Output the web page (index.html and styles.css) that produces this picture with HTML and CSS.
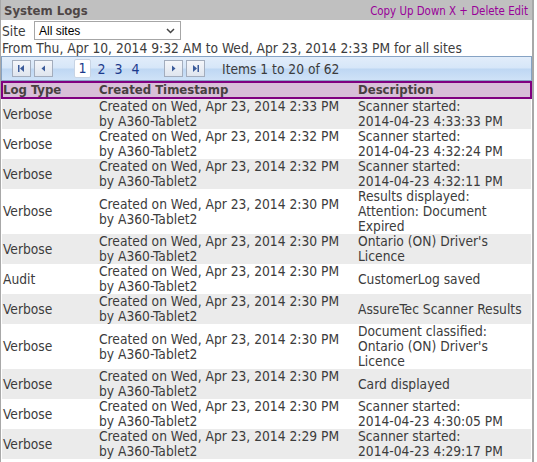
FILE: index.html
```html
<!DOCTYPE html>
<html>
<head>
<meta charset="utf-8">
<link rel="stylesheet" href="styles.css">
</head>
<body>
<div class="panel">
  <div class="titlebar">
    <span class="title">System Logs</span>
    <span class="actions"><a>Copy</a> <a>Up</a> <a>Down</a> <a>X</a> <a>+</a> <a>Delete</a> <a>Edit</a></span>
  </div>
  <div class="siterow">
    <span class="sitelabel">Site</span>
    <div class="select"><span>All sites</span>
      <svg width="9" height="6" viewBox="0 0 9 6"><path d="M1 1 L4.5 4.5 L8 1" fill="none" stroke="#444" stroke-width="1.5"/></svg>
    </div>
  </div>
  <div class="range">From Thu, Apr 10, 2014 9:32 AM to Wed, Apr 23, 2014 2:33 PM for all sites</div>
  <div class="pager">
    <div class="btns">
      <span class="pbtn"><svg width="9" height="9" viewBox="0 0 9 9"><rect x="1" y="1" width="1.5" height="7" fill="#3b5b9a"/><path d="M7 1 L3 4.5 L7 8 Z" fill="#3b5b9a"/></svg></span>
      <span class="pbtn"><svg width="9" height="9" viewBox="0 0 9 9"><path d="M6 1.5 L2.5 4.5 L6 7.5 Z" fill="#3b5b9a"/></svg></span>
    </div>
    <div class="pages"><span class="page cur">1</span><span class="page">2</span><span class="page">3</span><span class="page">4</span></div>
    <div class="btns">
      <span class="pbtn"><svg width="9" height="9" viewBox="0 0 9 9"><path d="M3 1.5 L6.5 4.5 L3 7.5 Z" fill="#3b5b9a"/></svg></span>
      <span class="pbtn"><svg width="9" height="9" viewBox="0 0 9 9"><path d="M2 1 L6 4.5 L2 8 Z" fill="#3b5b9a"/><rect x="6.5" y="1" width="1.5" height="7" fill="#3b5b9a"/></svg></span>
    </div>
    <div class="items">Items 1 to 20 of 62</div>
  </div>
  <table class="grid">
    <thead>
      <tr><th class="c1">Log Type</th><th class="c2">Created Timestamp</th><th class="c3">Description</th></tr>
    </thead>
    <tbody>
      <tr class="alt"><td>Verbose</td><td>Created on Wed, Apr 23, 2014 2:33 PM<br>by A360-Tablet2</td><td>Scanner started:<br>2014-04-23 4:33:33 PM</td></tr>
      <tr><td>Verbose</td><td>Created on Wed, Apr 23, 2014 2:32 PM<br>by A360-Tablet2</td><td>Scanner started:<br>2014-04-23 4:32:24 PM</td></tr>
      <tr class="alt"><td>Verbose</td><td>Created on Wed, Apr 23, 2014 2:32 PM<br>by A360-Tablet2</td><td>Scanner started:<br>2014-04-23 4:32:11 PM</td></tr>
      <tr><td>Verbose</td><td>Created on Wed, Apr 23, 2014 2:30 PM<br>by A360-Tablet2</td><td>Results displayed:<br>Attention: Document<br>Expired</td></tr>
      <tr class="alt"><td>Verbose</td><td>Created on Wed, Apr 23, 2014 2:30 PM<br>by A360-Tablet2</td><td>Ontario (ON) Driver's<br>Licence</td></tr>
      <tr><td>Audit</td><td>Created on Wed, Apr 23, 2014 2:30 PM<br>by A360-Tablet2</td><td>CustomerLog saved</td></tr>
      <tr class="alt"><td>Verbose</td><td>Created on Wed, Apr 23, 2014 2:30 PM<br>by A360-Tablet2</td><td>AssureTec Scanner Results</td></tr>
      <tr><td>Verbose</td><td>Created on Wed, Apr 23, 2014 2:30 PM<br>by A360-Tablet2</td><td>Document classified:<br>Ontario (ON) Driver's<br>Licence</td></tr>
      <tr class="alt"><td>Verbose</td><td>Created on Wed, Apr 23, 2014 2:30 PM<br>by A360-Tablet2</td><td>Card displayed</td></tr>
      <tr><td>Verbose</td><td>Created on Wed, Apr 23, 2014 2:30 PM<br>by A360-Tablet2</td><td>Scanner started:<br>2014-04-23 4:30:05 PM</td></tr>
      <tr class="alt"><td>Verbose</td><td>Created on Wed, Apr 23, 2014 2:29 PM<br>by A360-Tablet2</td><td>Scanner started:<br>2014-04-23 4:29:17 PM</td></tr>
    </tbody>
  </table>
</div>
</body>
</html>
```
FILE: styles.css
```css
html, body {
  margin: 0;
  padding: 0;
  background: #fff;
  overflow: hidden;
}
body {
  font-family: "DejaVu Sans Condensed", "DejaVu Sans", sans-serif;
  font-size: 13.7px;
  color: #3c3c3c;
}
.panel {
  width: 531px;
  border-left: 1px solid #a8a8a8;
  border-right: 2px solid #a8a8a8;
  min-height: 462px;
}
.titlebar {
  height: 20px;
  background: #c0c0c0;
  display: flex;
  align-items: flex-end;
  justify-content: space-between;
  padding: 0 4px 0 3px;
}
.title {
  font-weight: bold;
  font-size: 13px;
  color: #4e4646;
  line-height: 17px;
  padding-bottom: 1px;
}
.actions {
  font-size: 11.4px;
  color: #990099;
  line-height: 15px;
  padding-bottom: 1px;
}
.actions a { color: #990099; }
.siterow {
  height: 21px;
  display: flex;
  align-items: center;
  padding-left: 1px;
}
.sitelabel {
  width: 32px;
}
.select {
  box-sizing: border-box;
  width: 147px;
  height: 19px;
  border: 1px solid #a6a6a6;
  display: flex;
  align-items: center;
  justify-content: space-between;
  padding: 0 5px 0 4px;
  font-family: "Liberation Sans", sans-serif;
  font-size: 12px;
  color: #000;
}
.range {
  padding-left: 1px;
  line-height: 15px;
  height: 15px;
}
.pager {
  height: 23px;
  border: 1px solid #86a3c4;
  background: linear-gradient(#e2edfa 0%, #d6e6f8 48%, #bed7f3 52%, #cfe2f7 100%);
  display: flex;
  align-items: center;
  padding-left: 10px;
}
.btns {
  display: flex;
  gap: 3px;
}
.pbtn {
  width: 17px;
  height: 15px;
  border: 1px solid #a3adbd;
  background: linear-gradient(#f4f6fa, #dfe5ee);
  display: flex;
  align-items: center;
  justify-content: center;
}
.pages {
  display: flex;
  align-items: center;
  margin: 0 20px 0 21px;
  font-size: 14px;
  color: #1c3a8c;
}
.page {
  width: 17px;
  text-align: center;
}
.page.cur {
  width: 15px;
  height: 17px;
  line-height: 17px;
  background: #fff;
  border: 1px solid #c8d4e4;
  border-radius: 2px;
  margin-right: 2px;
}
.items {
  margin-left: 17px;
}
.grid {
  width: 531px;
  border-collapse: collapse;
  table-layout: fixed;
}
.grid th {
  background: #d8bfd8;
  border-top: 2px solid #800080;
  border-bottom: 2px solid #800080;
  text-align: left;
  font-weight: bold;
  font-size: 13px;
  color: #474040;
  height: 14px;
  line-height: 14px;
  padding: 0 0 0 2px;
}
.grid th.c1 { width: 94px; border-left: 2px solid #800080; padding-left: 0; }
.grid th.c2 { width: 257px; }
.grid th.c3 { border-right: 2px solid #800080; }
.grid td {
  vertical-align: middle;
  line-height: 15px;
  padding: 0 0 0 2px;
  white-space: nowrap;
}
.grid td:first-child { padding-left: 1px; }
.grid tr.alt td { background: #ebebeb; }
```
